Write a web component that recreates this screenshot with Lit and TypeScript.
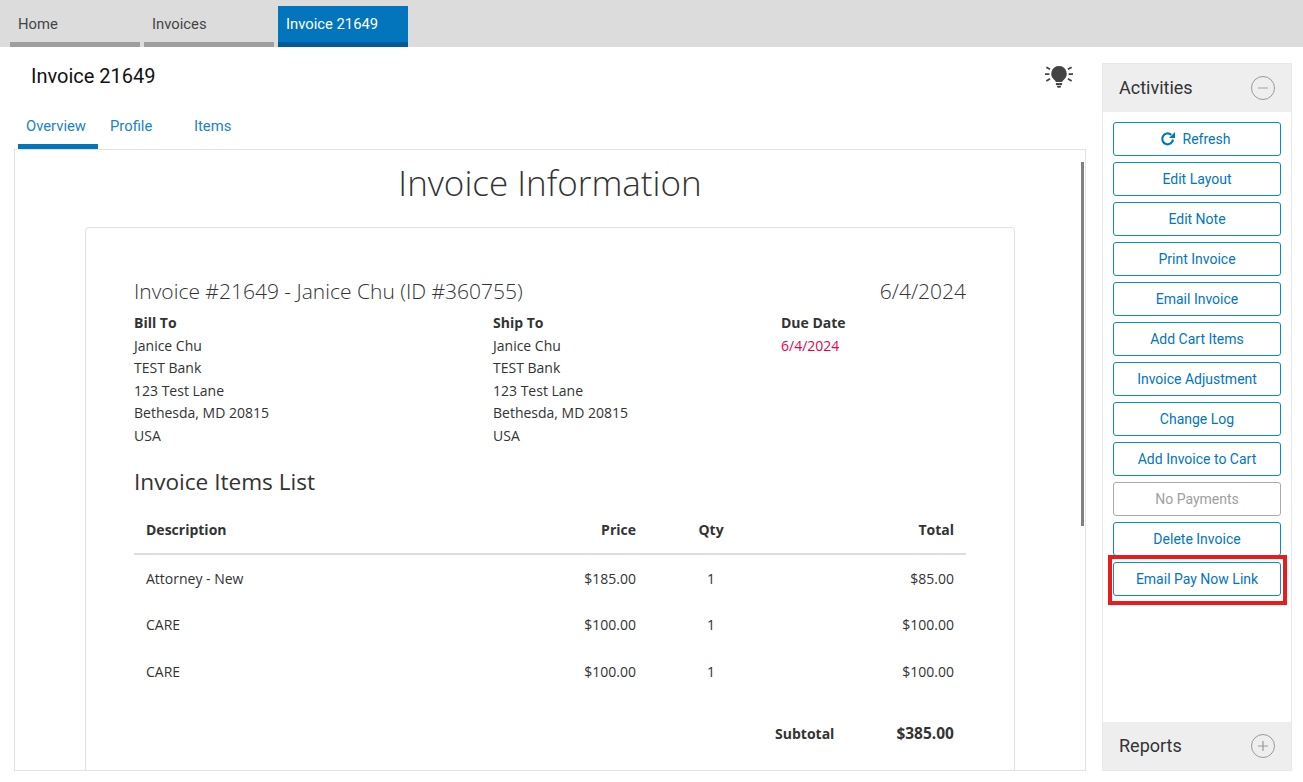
import { LitElement, html, css } from 'lit';
import { customElement } from 'lit/decorators.js';

const activities = [
  'Edit Layout',
  'Edit Note',
  'Print Invoice',
  'Email Invoice',
  'Add Cart Items',
  'Invoice Adjustment',
  'Change Log',
  'Add Invoice to Cart',
];

const address = ['Janice Chu', 'TEST Bank', '123 Test Lane', 'Bethesda, MD 20815', 'USA'];

const items = [
  { name: 'Attorney - New', price: '$185.00', qty: 1, total: '$85.00' },
  { name: 'CARE', price: '$100.00', qty: 1, total: '$100.00' },
  { name: 'CARE', price: '$100.00', qty: 1, total: '$100.00' },
];

@customElement('app-root')
export class AppRoot extends LitElement {
  static styles = css`
    :host {
      display: block;
      width: 1303px;
      height: 782px;
      overflow: hidden;
      background: #fff;
      font-family: Roboto, sans-serif;
      color: #333;
    }
    .topbar {
      height: 47px;
      box-sizing: border-box;
      background: #dcdcdc;
      padding: 6px 0 0 10px;
      display: flex;
      gap: 4px;
    }
    .toptab {
      width: 130px;
      box-sizing: border-box;
      padding: 9px 8px 0;
      font-size: 14.8px;
      line-height: 18px;
      color: #444;
      border-bottom: 5px solid #9e9e9e;
    }
    .toptab.active {
      background: #0275bd;
      color: #fff;
      border-bottom-color: #02599b;
    }
    .main {
      display: flex;
      height: 724px;
      padding: 17px 0 0 14px;
      box-sizing: border-box;
      gap: 16px;
    }
    .left {
      width: 1072px;
      display: flex;
      flex-direction: column;
    }
    .title-row {
      display: flex;
      justify-content: space-between;
      padding: 0 12px 0 17px;
      height: 47px;
    }
    .title {
      font-size: 20px;
      line-height: 24px;
      color: #111;
    }
    .bulb {
      margin: 1px 1px 0 0;
      width: 28px;
      height: 24px;
    }
    .tabs {
      display: flex;
      padding-left: 4px;
      height: 38px;
      font-size: 14.8px;
      color: #1a82c7;
    }
    .tab {
      padding: 6px 0 0 8px;
      line-height: 18px;
      box-sizing: border-box;
    }
    .tab.active {
      width: 80px;
      border-bottom: 5px solid #0275bd;
    }
    .tab.profile {
      width: 88px;
      padding-left: 12px;
    }
    .frame {
      position: relative;
      flex: 1;
      min-height: 0;
      border: 1px solid #e3e3e3;
      overflow: hidden;
      font-family: 'Open Sans', sans-serif;
    }
    .scrollbar {
      position: absolute;
      top: 12px;
      right: 1px;
      width: 3px;
      height: 364px;
      background: #808080;
    }
    h1 {
      margin: 0;
      padding-top: 8px;
      height: 77px;
      box-sizing: border-box;
      text-align: center;
      font-size: 35px;
      font-weight: 300;
      line-height: 50px;
      color: #333;
    }
    .card {
      margin-left: 70px;
      width: 930px;
      height: 600px;
      box-sizing: border-box;
      border: 1px solid #e0e0e0;
      border-radius: 4px;
      padding: 47px 48px 0;
      font-size: 14px;
      line-height: 22.5px;
    }
    .invoice-head {
      display: flex;
      justify-content: space-between;
      font-size: 21px;
      font-weight: 300;
      line-height: 32px;
      margin-bottom: 5px;
    }
    .info {
      display: grid;
      grid-template-columns: 359px 288px 1fr;
    }
    .info b {
      display: block;
      font-weight: 700;
    }
    .due {
      color: #e8004c;
    }
    h2 {
      margin: 19px 0 12px;
      font-size: 22.6px;
      font-weight: 400;
      line-height: 32px;
      color: #333;
    }
    .row {
      display: grid;
      grid-template-columns: 330px 160px 150px 1fr;
      padding: 0 12px;
    }
    .row > :nth-child(2),
    .row > :nth-child(4) {
      text-align: right;
    }
    .row > :nth-child(3) {
      text-align: center;
    }
    .row.head {
      font-weight: 700;
      height: 45px;
      padding-top: 9px;
      box-sizing: border-box;
      border-bottom: 2px solid #ddd;
    }
    .row.item {
      height: 46.5px;
      padding-top: 12.75px;
      box-sizing: border-box;
    }
    .subtotal {
      display: flex;
      justify-content: flex-end;
      align-items: baseline;
      gap: 62px;
      padding: 27px 12px 0 0;
      font-weight: 700;
    }
    .subtotal-value {
      font-size: 15.5px;
    }
    .side {
      width: 190px;
      margin-top: -1px;
      box-sizing: border-box;
      border: 1px solid #e8e8e8;
      display: flex;
      flex-direction: column;
    }
    .side-head {
      height: 48px;
      flex: none;
      background: #eee;
      display: flex;
      align-items: center;
      justify-content: space-between;
      padding: 0 16px 1px;
      box-sizing: border-box;
      font-size: 18px;
      color: #333;
    }
    .activities {
      flex: 1;
      padding: 10px;
      display: flex;
      flex-direction: column;
      gap: 6px;
    }
    .btn {
      height: 34px;
      box-sizing: border-box;
      border: 1px solid #0a8ad0;
      border-radius: 3px;
      display: flex;
      align-items: center;
      justify-content: center;
      gap: 7px;
      font-size: 14px;
      color: #0275bd;
      background: #fff;
    }
    .btn.refresh {
      padding-right: 4px;
    }
    .btn.off {
      color: #a0a0a0;
      border-color: #aaa;
    }
    .highlight {
      position: relative;
    }
    .highlight::after {
      content: '';
      position: absolute;
      inset: -8px -7px -10px -6px;
      border: 4px solid #e81c1c;
    }
  `;

  render() {
    return html`
      <div class="topbar">
        <div class="toptab">Home</div>
        <div class="toptab">Invoices</div>
        <div class="toptab active">Invoice 21649</div>
      </div>
      <div class="main">
        <div class="left">
          <div class="title-row">
            <div class="title">Invoice 21649</div>
            <svg class="bulb" viewBox="0 0 28 24" fill="#444">
              <path d="M14 1a7.8 7.8 0 0 0-4.6 14c.9.7 1.3 1.2 1.4 2.1h6.4c.1-.9.5-1.4 1.4-2.1A7.8 7.8 0 0 0 14 1z" />
              <path d="M10.9 18h6.2v2h-6.2zM11.6 20.7h4.8l-1.1 2h-2.6z" />
              <path d="M0 8.2h4.4v1.8H0zM23.6 8.2H28v1.8h-4.4zM1.8 1.4l3.7 2.2-.9 1.5L.9 2.9zM26.2 1.4l.9 1.5-3.7 2.2-.9-1.5zM4.6 13.1l.9 1.5-3.7 2.2-.9-1.5zM23.4 13.1l3.7 2.2-.9 1.5-3.7-2.2z" />
            </svg>
          </div>
          <div class="tabs">
            <div class="tab active">Overview</div>
            <div class="tab profile">Profile</div>
            <div class="tab">Items</div>
          </div>
          <div class="frame">
            <div class="scrollbar"></div>
            <h1>Invoice Information</h1>
            <div class="card">
              <div class="invoice-head">
                <span>Invoice #21649 - Janice Chu (ID #360755)</span>
                <span>6/4/2024</span>
              </div>
              <div class="info">
                <div><b>Bill To</b>${address.map((l) => html`<div>${l}</div>`)}</div>
                <div><b>Ship To</b>${address.map((l) => html`<div>${l}</div>`)}</div>
                <div><b>Due Date</b><div class="due">6/4/2024</div></div>
              </div>
              <h2>Invoice Items List</h2>
              <div class="row head">
                <span>Description</span><span>Price</span><span>Qty</span><span>Total</span>
              </div>
              ${items.map(
                (i) => html`<div class="row item">
                  <span>${i.name}</span><span>${i.price}</span><span>${i.qty}</span><span>${i.total}</span>
                </div>`
              )}
              <div class="subtotal"><span>Subtotal</span><span class="subtotal-value">$385.00</span></div>
            </div>
          </div>
        </div>
        <div class="side">
          <div class="side-head">
            <span>Activities</span>
            <svg width="24" height="24" viewBox="0 0 24 24" fill="none" stroke="#999">
              <circle cx="12" cy="12" r="11.5" />
              <path d="M7 12h10" stroke="#bbb" stroke-width="1.5" />
            </svg>
          </div>
          <div class="activities">
            <div class="btn refresh">
              <svg width="16" height="16" viewBox="0 0 16 16" fill="none">
                <path d="M13 8.5A5.4 5.4 0 1 1 11.2 3.8" stroke="#0275bd" stroke-width="2.2" />
                <path d="M15 1v6h-6z" fill="#0275bd" />
              </svg>
              Refresh
            </div>
            ${activities.map((a) => html`<div class="btn">${a}</div>`)}
            <div class="btn off">No Payments</div>
            <div class="btn">Delete Invoice</div>
            <div class="btn highlight">Email Pay Now Link</div>
          </div>
          <div class="side-head">
            <span>Reports</span>
            <svg width="24" height="24" viewBox="0 0 24 24" fill="none" stroke="#999">
              <circle cx="12" cy="12" r="11.5" />
              <path d="M7 12h10M12 7v10" stroke-width="1.2" />
            </svg>
          </div>
        </div>
      </div>
    `;
  }
}
